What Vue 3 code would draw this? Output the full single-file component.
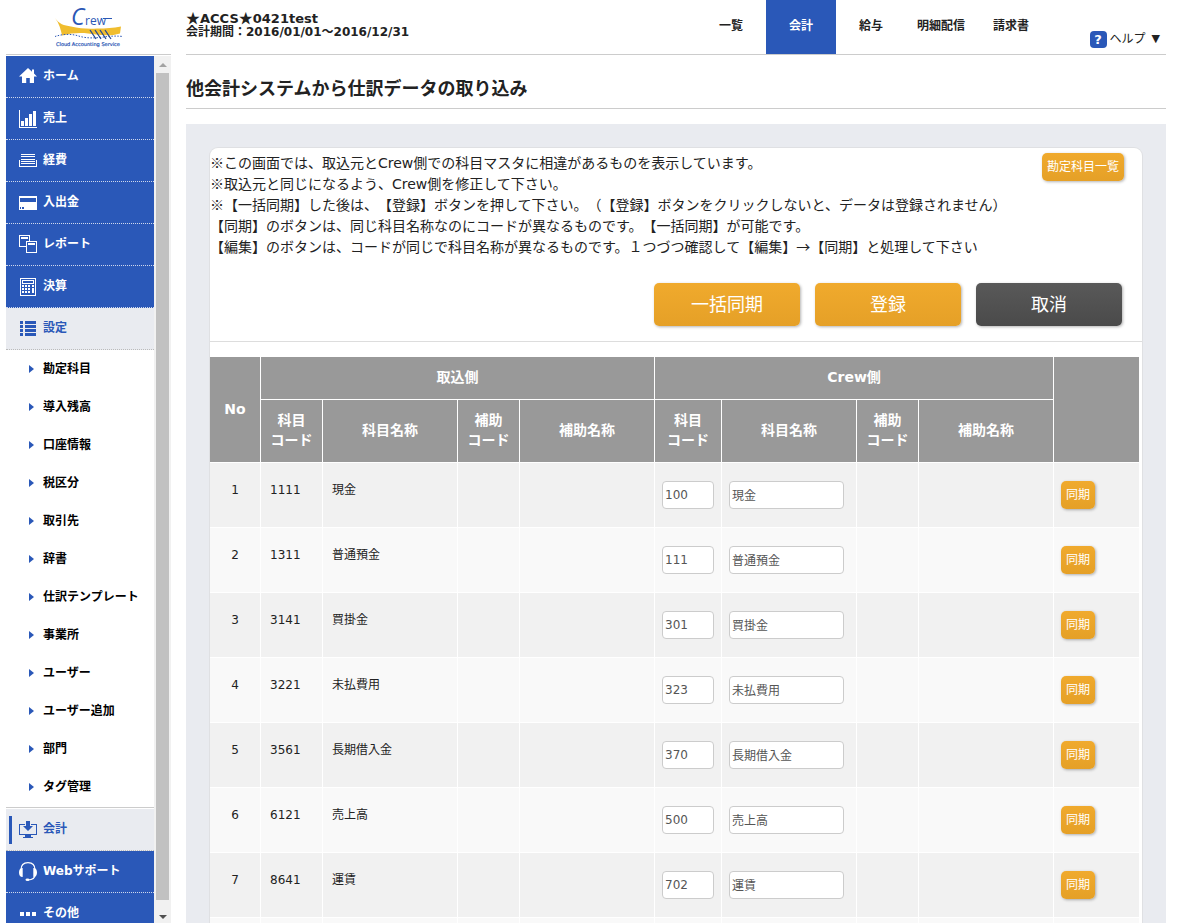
<script setup>
import { ref } from 'vue'

const menu = [
  { icon: 'home', label: 'ホーム' },
  { icon: 'sales', label: '売上' },
  { icon: 'expense', label: '経費' },
  { icon: 'cash', label: '入出金' },
  { icon: 'report', label: 'レポート' },
  { icon: 'closing', label: '決算' },
  { icon: 'settings', label: '設定', open: true },
]

const settings = [
  '勘定科目', '導入残高', '口座情報', '税区分', '取引先', '辞書',
  '仕訳テンプレート', '事業所', 'ユーザー', 'ユーザー追加', '部門', 'タグ管理',
]

const lowerMenu = [
  { icon: 'accounting', label: '会計', open: true, current: true },
  { icon: 'support', label: 'Webサポート' },
  { icon: 'more', label: 'その他' },
]

const icons = {
  home: '<path fill="currentColor" d="M9 2 0 10.500h3V17h4.200v-5h3.600v5H15v-6.500h3L15 7.600V3.500h-2v2.200z"/>',
  sales: '<path fill="currentColor" d="M0 2h1v17h17v1H0zM2 13h3v5H2zM6 10h3v8H6zM10 6h3v12h-3zM14 3h3v15h-3z"/>',
  expense: '<path fill="currentColor" d="M2 4h14v1H2zM2 6h14v1H2zM2 9h14v1H2zM2 11h14v1H2zM2 13h14v1H2zM0 10h1v6h16v-6h1v7H0z"/>',
  cash: '<path fill="currentColor" fill-rule="evenodd" d="M0 4h18v14H0zM1 6h16v4H1zM1 15h1v2H1zM3 15h2v2H3z"/>',
  report: '<path fill="currentColor" fill-rule="evenodd" d="M0 1h11v6h7v12H7v-6H0zM1 2v10h6V7h3V2zM8 8v10h9V8z"/><path fill="currentColor" d="M2 3h7v2H2zM9 9h7v2H9z"/>',
  closing: '<path fill="currentColor" fill-rule="evenodd" d="M1 2h16v18H1zM2 3v16h14V3zM3 4h12v4H3zM4 5v2h10V5z"/><path fill="currentColor" d="M3 9h2v2H3zM6 9h2v2H6zM9 9h2v2H9zM13 9h2v2h-2zM3 12h2v2H3zM6 12h2v2H6zM9 12h2v2H9zM13 12h2v5h-2zM3 15h2v2H3zM6 15h2v2H6zM9 15h2v2H9z"/>',
  settings: '<path fill="currentColor" d="M1 3h3v3H1zM6 3h11v3H6zM1 7h3v3H1zM6 7h11v3H6zM1 11h3v3H1zM6 11h11v3H6zM1 15h3v3H1zM6 15h11v3H6z"/>',
  accounting: '<path fill="currentColor" d="M0 5h6v1H1v9h16V6h-5V5h6v11H0zM7 2h4v5h3l-5 5-5-5h3zM6 16h6v2H6z"/><path fill="currentColor" d="M4 18h10v1H4z"/>',
  support: '<path fill="none" stroke="currentColor" stroke-width="1.200" d="M2 9C2 4 5 1.700 9 1.700S16 4 16 9M16 14c0 3-3 4.700-7 5"/><path fill="currentColor" d="M3.700 7v9C1 16 0 14 0 11.500S1 7 3.700 7zM14.300 7v9c2.700 0 3.700-2 3.700-4.500S17 7 14.300 7z"/><ellipse cx="8.500" cy="18.800" rx="2" ry="1.200" fill="currentColor"/>',
  more: '<path fill="currentColor" d="M1 9h4v4H1zM7 9h4v4H7zM13 9h4v4h-4z"/>',
}

const tabs = ['一覧', '会計', '給与', '明細配信', '請求書']

const rows = ref([
  { code: '1111', name: '現金', crewCode: '100', crewName: '現金' },
  { code: '1311', name: '普通預金', crewCode: '111', crewName: '普通預金' },
  { code: '3141', name: '買掛金', crewCode: '301', crewName: '買掛金' },
  { code: '3221', name: '未払費用', crewCode: '323', crewName: '未払費用' },
  { code: '3561', name: '長期借入金', crewCode: '370', crewName: '長期借入金' },
  { code: '6121', name: '売上高', crewCode: '500', crewName: '売上高' },
  { code: '8641', name: '運賃', crewCode: '702', crewName: '運賃' },
])
</script>

<template>
  <div class="page">
    <aside class="sidebar">
      <a class="brand" href="#" aria-label="Crew Cloud Accounting Service">
        <svg width="76" height="54" viewBox="0 -6 76 54">
          <path fill="#f0bd2e" d="M4 12c4 6 9 7.500 16 8.500 9 2 17 2.500 26 2 9 0 16-.5 24-2l-1 7c-8 2.500-16 2-24 1-11-2-22-2.500-34 1C10 24 8 17 4 12z" />
          <path fill="none" stroke="#2b57b5" stroke-width="1" stroke-dasharray="1.500 1.500" d="M4 30.500c6-2 14-3 22-1 6 2 12 3 22 2s14-2 24-1" />
          <path stroke="#28488f" stroke-width="1.300" d="m39 24 6 9M44 24l6 9M49 24l6 9M54 24l6 9" />
          <path stroke="#2b57b5" d="M52 12.500h9" />
          <text class="brand-c" x="20" y="19">C</text>
          <text class="brand-rew" x="34" y="19">rew</text>
          <text class="brand-sub" x="5" y="40">Cloud Accounting Service</text>
        </svg>
      </a>
      <div class="side-body">
        <nav class="side-nav">
          <a v-for="m in menu" :key="m.label" href="#" class="item" :class="{ open: m.open }">
            <svg width="18" height="20" viewBox="0 0 18 20" v-html="icons[m.icon]"></svg>
            <span>{{ m.label }}</span>
          </a>
          <div class="sub">
            <a v-for="s in settings" :key="s" href="#">{{ s }}</a>
          </div>
          <a v-for="m in lowerMenu" :key="m.label" href="#" class="item" :class="{ open: m.open, current: m.current }">
            <svg width="18" height="20" viewBox="0 0 18 20" v-html="icons[m.icon]"></svg>
            <span>{{ m.label }}</span>
          </a>
        </nav>
        <div class="scrollbar">
          <i class="up"></i>
          <div class="thumb"></div>
          <i class="down"></i>
        </div>
      </div>
    </aside>

    <main class="main">
      <header class="top">
        <div class="company">
          <div class="company-name"><span class="star">★</span>ACCS<span class="star">★</span>0421test</div>
          <div class="period">会計期間：2016/01/01～2016/12/31</div>
        </div>
        <nav class="tabs">
          <a v-for="t in tabs" :key="t" href="#" :class="{ active: t === '会計' }">{{ t }}</a>
        </nav>
        <button class="help" type="button"><span class="q">?</span><span>ヘルプ</span><span class="caret">▼</span></button>
      </header>

      <h1>他会計システムから仕訳データの取り込み</h1>

      <div class="canvas">
        <section class="card">
          <div class="intro">
            <p>
              <span class="cjk">※</span>この画面では、取込元とCrew側での科目マスタに相違があるものを表示しています。<br>
              <span class="cjk">※</span>取込元と同じになるよう、Crew側を修正して下さい。<br>
              <span class="cjk">※</span>【一括同期】した後は、【登録】ボタンを押して下さい。（【登録】ボタンをクリックしないと、データは登録されません）<br>
              【同期】のボタンは、同じ科目名称なのにコードが異なるものです。【一括同期】が可能です。<br>
              【編集】のボタンは、コードが同じで科目名称が異なるものです。１つづつ確認して【編集】<span class="cjk">→</span>【同期】と処理して下さい
            </p>
            <button class="btn small" type="button">勘定科目一覧</button>
          </div>
          <div class="actions">
            <button class="btn large" type="button">一括同期</button>
            <button class="btn large" type="button">登録</button>
            <button class="btn large dark" type="button">取消</button>
          </div>

          <table>
            <colgroup>
              <col class="w-no"><col class="w-code"><col class="w-name"><col class="w-code"><col class="w-name">
              <col class="w-input"><col class="w-name"><col class="w-code"><col class="w-name"><col>
            </colgroup>
            <thead>
              <tr class="group">
                <th rowspan="2">No</th>
                <th colspan="4">取込側</th>
                <th colspan="4">Crew側</th>
                <th rowspan="2"></th>
              </tr>
              <tr class="heads">
                <template v-for="n in 2" :key="n">
                  <th>科目<br>コード</th>
                  <th>科目名称</th>
                  <th>補助<br>コード</th>
                  <th>補助名称</th>
                </template>
              </tr>
            </thead>
            <tbody>
              <tr v-for="(r, i) in rows" :key="r.code">
                <td class="no">{{ i + 1 }}</td>
                <td>{{ r.code }}</td>
                <td>{{ r.name }}</td>
                <td></td>
                <td></td>
                <td class="field"><input v-model="r.crewCode" class="in-code" type="text" aria-label="科目コード"></td>
                <td class="field"><input v-model="r.crewName" class="in-name" type="text" aria-label="科目名称"></td>
                <td></td>
                <td></td>
                <td class="field"><button class="btn small" type="button">同期</button></td>
              </tr>
              <tr><td v-for="n in 10" :key="n"></td></tr>
            </tbody>
          </table>
        </section>
      </div>
    </main>
  </div>
</template>

<style>
body {
  background: #fff;
}
</style>

<style scoped>
.page {
  display: flex;
  gap: 15px;
  height: 100vh;
  padding: 0 22px 0 6px;
  box-sizing: border-box;
  overflow: hidden;
  font-family: "DejaVu Sans", "Noto Sans CJK JP", sans-serif;
  font-size: 12px;
  line-height: 18px;
  color: #222;
  text-spacing-trim: space-all;
}
.page a {
  color: inherit;
  text-decoration: none;
}
button,
input {
  font-family: inherit;
  box-sizing: border-box;
}

/* sidebar */
.sidebar {
  flex: none;
  width: 165px;
  display: flex;
  flex-direction: column;
}
.brand {
  display: flex;
  justify-content: center;
  height: 54px;
  border-bottom: 1px solid #ccc;
  margin-bottom: 1px;
}
.brand-c {
  font: italic 23px "Open Sans", sans-serif;
  fill: #2b57b5;
}
.brand-rew {
  font: 12px "Open Sans", sans-serif;
  fill: #2b57b5;
}
.brand-sub {
  font: 5px "DejaVu Sans", sans-serif;
  fill: #2b57b5;
  stroke: #2b57b5;
  stroke-width: 0.2;
}
.side-body {
  flex: 1;
  min-height: 0;
  display: flex;
}
.side-nav {
  flex: 1;
  overflow: hidden;
}
.item {
  position: relative;
  display: flex;
  align-items: center;
  gap: 6px;
  height: 20px;
  padding: 10px 13px 11px;
  border-bottom: 1px dotted #cfd8ec;
  background: #2a58b8;
  font-weight: bold;
}
.item span {
  line-height: 20px;
}
.page .item {
  color: #fff;
}
.page .item.open {
  background: #e9ebf0;
  border-bottom-color: #bbb;
  color: #2a58b8;
}
.item.current::before {
  content: "";
  position: absolute;
  left: 3px;
  top: 7px;
  width: 3px;
  height: 28px;
  background: #2a58b8;
}
.sub {
  padding-bottom: 1px;
  border-bottom: 1px solid #ccc;
  margin-bottom: 1px;
}
.sub a {
  display: flex;
  align-items: center;
  gap: 9px;
  height: 38px;
  padding-left: 23px;
  color: #000;
  font-weight: bold;
  white-space: nowrap;
}
.sub a::before {
  content: "";
  border-style: solid;
  border-width: 4px 0 4px 5px;
  border-color: transparent transparent transparent #2a58b8;
}
.scrollbar {
  flex: none;
  width: 13px;
  padding: 0 2px;
  background: #f1f1f1;
  display: flex;
  flex-direction: column;
  align-items: center;
}
.thumb {
  flex: 1;
  width: 100%;
  background: #c1c1c1;
}
.up,
.down {
  border-style: solid;
  border-color: transparent;
}
.up {
  margin: 7px 0 6px;
  border-width: 0 4px 4px;
  border-bottom-color: #a3a3a3;
}
.down {
  margin: 15px 0 4px;
  border-width: 4px 4px 0;
  border-top-color: #505050;
}

/* header */
.main {
  flex: 1;
  min-width: 0;
  display: flex;
  flex-direction: column;
}
.top {
  flex: none;
  display: flex;
  height: 54px;
  border-bottom: 1px solid #ccc;
}
.company {
  flex: 1;
  padding-top: 11px;
  font-weight: bold;
  line-height: 15px;
  white-space: nowrap;
}
.company-name {
  font-size: 13px;
  height: 14px;
}
.star {
  font-family: "Noto Sans CJK JP", sans-serif;
  font-size: 14px;
  line-height: 10px;
}
.tabs {
  display: flex;
}
.tabs a {
  width: 70px;
  line-height: 52px;
  height: 54px;
  text-align: center;
  font-weight: bold;
}
.page .tabs .active {
  background: #2a58b8;
  color: #fff;
}
.help {
  flex: none;
  width: 120px;
  display: flex;
  align-items: center;
  justify-content: flex-end;
  gap: 3px;
  padding: 24px 6px 0 0;
  border: 0;
  background: none;
  color: #222;
  font-size: 12px;
  line-height: 14px;
}
.q {
  width: 17px;
  border-radius: 4px;
  background: #2a58b8;
  color: #fff;
  font-weight: bold;
  font-size: 13px;
  line-height: 17px;
}
.caret {
  font-size: 11px;
  padding-left: 3px;
}
h1 {
  flex: none;
  margin: 0 0 15px;
  padding: 20px 0 5px;
  border-bottom: 1px solid #ccc;
  font-size: 18px;
  line-height: 28px;
}

/* content */
.canvas {
  flex: 1;
  padding: 24px 24px 0;
  background: #e9ebf0;
}
.card {
  background: #fff;
  border-radius: 8px;
  box-shadow: 0 0 0 1px #dfe0e3;
}
.intro {
  display: flex;
  justify-content: space-between;
  align-items: flex-start;
  padding: 5px 18px 0 0;
}
.intro p {
  margin: 0;
  font-size: 14px;
  line-height: 21px;
}
.cjk {
  font-family: "Noto Sans CJK JP", sans-serif;
  line-height: 10px;
}
.actions {
  display: flex;
  justify-content: flex-end;
  gap: 15px;
  padding: 25px 20px 15px 0;
  margin-bottom: 15px;
  border-bottom: 1px solid #ddd;
}
.btn {
  border: 0;
  border-radius: 5px;
  background: linear-gradient(#f0aa2d, #e5a027);
  box-shadow: 1px 1px 3px rgba(0, 0, 0, 0.3);
  color: #fff;
  white-space: nowrap;
}
.small {
  display: block;
  height: 28px;
  padding: 0 5px;
  font-size: 12px;
  line-height: 28px;
}
.large {
  width: 146px;
  height: 43px;
  padding: 0;
  font-size: 18px;
  line-height: 43px;
}
.dark {
  background: linear-gradient(#595959, #4a4a4a);
}

/* table */
table {
  width: calc(100% - 3px);
  table-layout: fixed;
  border-collapse: separate;
  border-spacing: 0;
}
.w-no { width: 51px; }
.w-code { width: 62px; }
.w-name { width: 135px; }
.w-input { width: 67px; }
th {
  padding: 0 0 2px;
  background: #999;
  color: #fff;
  border: solid #fff;
  border-width: 0 1px 1px 0;
  font-size: 14px;
  line-height: 20px;
}
th:last-child:empty,
td:last-child {
  border-right: 0;
}
.group th {
  height: 40px;
}
.heads th {
  height: 60px;
}
td {
  height: 46px;
  padding: 18px 0 0 9px;
  border: solid #fff;
  border-width: 0 1px 1px 0;
  background: #f9f9f9;
  vertical-align: top;
}
tr:nth-child(odd) td {
  background: #f1f1f1;
}
.no {
  padding-left: 0;
  text-align: center;
}
.field {
  padding-left: 7px;
}
input {
  display: block;
  height: 28px;
  padding: 0 2px;
  border: 1px solid #ccc;
  border-radius: 4px;
  background: #fff;
  color: #555;
  font-size: 12px;
  line-height: 26px;
}
.in-code { width: 52px; }
.in-name {
  width: 115px;
  padding-bottom: 2px;
}
</style>
